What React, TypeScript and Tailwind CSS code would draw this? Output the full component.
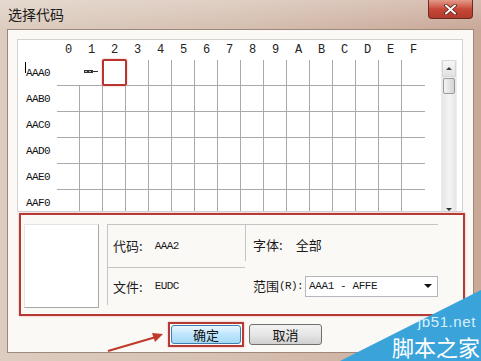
import React from 'react';

const cols = ['0', '1', '2', '3', '4', '5', '6', '7', '8', '9', 'A', 'B', 'C', 'D', 'E', 'F'];
const rows = ['AAA0', 'AAB0', 'AAC0', 'AAD0', 'AAE0', 'AAF0'];

const cjk = "font-['Noto_Sans_CJK_SC','Noto_Sans',sans-serif]";
const mono = "font-['Liberation_Mono','DejaVu_Sans_Mono',monospace]";

const Cell: React.FC<{ row: number; col: number }> = ({ row, col }) => {
  const last = col === 15;
  const hideLine = row === 0 && col === 0;
  return (
    <div
      className={`relative w-[23px] h-[26px] shrink-0 border-b border-[#a9a9a9] ${
        last || hideLine ? '' : 'border-r'
      }`}
    >
      {row === 0 && col === 1 && (
        <svg className="absolute left-[4px] top-[10px]" width="14" height="4" viewBox="0 0 14 4">
          <rect x="0" y="0" width="9" height="3" fill="#333" />
          <rect x="1" y="1" width="2" height="1" fill="#bbb" />
          <rect x="5" y="1" width="2" height="1" fill="#bbb" />
          <rect x="9" y="1" width="5" height="1" fill="#333" />
        </svg>
      )}
      {row === 0 && col === 2 && (
        <div className="absolute -left-[1px] -top-[1px] w-[25px] h-[27px] border-2 border-[#b8342f] shadow-[0_0_2px_#e89a98] rounded-[2px]" />
      )}
    </div>
  );
};

const GridPanel: React.FC = () => (
  <div className="w-[446px] h-[173px] shrink-0 border border-[#d2d2d2] bg-white flex overflow-hidden">
    <div className="flex flex-col">
      <div className={`h-[20px] flex items-center shrink-0 ${mono} text-[12px] text-[#222]`}>
        <div className="w-[39px] shrink-0" />
        {cols.map((c) => (
          <div key={c} className="w-[23px] shrink-0 text-center leading-none">
            {c}
          </div>
        ))}
      </div>
      {rows.map((r, ri) => (
        <div key={r} className="flex shrink-0">
          <div className={`relative w-[39px] shrink-0 h-[26px] flex items-center pl-[8px] ${mono} text-[11px] tracking-[-0.6px] text-[#111]`}>
            {ri === 0 && <div className="absolute left-[7px] top-[2px] w-[1px] h-[11px] bg-black" />}
            {r}
          </div>
          {cols.map((c, ci) => (
            <Cell key={c} row={ri} col={ci} />
          ))}
        </div>
      ))}
    </div>
    <div className="ml-[16px] mt-[20px] w-[16px] shrink-0 flex flex-col bg-[linear-gradient(to_right,#e6e6e6,#f4f4f4_50%,#e6e6e6)] border-x border-[#ececec]">
      <div className="h-[17px] flex items-center justify-center bg-gradient-to-b from-[#f7f7f7] to-[#e2e2e2] border border-[#d6d6d6] rounded-[2px]">
        <div className="w-0 h-0 border-x-[3px] border-x-transparent border-b-[3px] border-b-[#404040]" />
      </div>
      <div className="mt-[1px] h-[16px] mx-[1px] bg-gradient-to-r from-[#f3f3f3] via-[#e4e4e4] to-[#d4d4d4] border border-[#9a9a9a] rounded-[2px]" />
      <div className="flex-1" />
      <div className="h-[3px] flex justify-center">
        <div className="w-0 h-0 border-x-[3px] border-x-transparent border-t-[3px] border-t-[#303030]" />
      </div>
    </div>
  </div>
);

const InfoArea: React.FC = () => (
  <div className="ml-[2px] mt-[1px] w-[446px] h-[103px] shrink-0 border-2 border-[#b53a36] shadow-[0_0_2px_#eaa6a4] flex pl-[3px] pt-[9px]">
    <div className="w-[75px] h-[84px] border border-[#e4e4e4] border-r-[#a8a8a8] border-b-[#a8a8a8] bg-white" />
    <div className={`ml-[8px] flex flex-col ${cjk} text-[13px] text-[#1a1a1a]`}>
      <div className="flex h-[43px]">
        <div className="w-[138px] border-t border-l border-[#c4c4c4] flex items-center pl-[5px]">
          <span>代码:</span>
          <span className={`ml-[12px] ${mono} text-[11px] tracking-[-0.6px]`}>AAA2</span>
        </div>
        <div className="w-[193px] h-[37px] border-t border-l border-[#c4c4c4] flex items-center pl-[7px] pt-[4px]">
          <span>字体:</span>
          <span className="ml-[13px]">全部</span>
        </div>
      </div>
      <div className="flex h-[38px]">
        <div className="w-[138px] border-t border-l border-[#c4c4c4] flex items-center pl-[5px]">
          <span>文件:</span>
          <span className={`ml-[12px] ${mono} text-[11px] tracking-[-0.6px]`}>EUDC</span>
        </div>
        <div className="flex items-center pl-[8px]">
          <span>范围</span>
          <span className={`${mono} text-[11px] tracking-[-0.6px]`}>(R):</span>
          <div className="ml-[2px] w-[133px] h-[21px] border border-[#b4b6bc] bg-white flex items-center pl-[3px] pr-[5px]">
            <span className={`${mono} text-[11px] tracking-[-0.4px] whitespace-pre`}>AAA1 - AFFE</span>
            <div className="ml-auto w-0 h-0 border-x-[4px] border-x-transparent border-t-[4px] border-t-[#111]" />
          </div>
        </div>
      </div>
    </div>
  </div>
);

export default function App() {
  return (
    <div className="relative w-[481px] h-[361px] overflow-hidden flex flex-col bg-gradient-to-r from-[#ddcdc0] via-[#d5bfb0] to-[#c9a898]">
      <div className="h-[29px] shrink-0 flex justify-between items-start bg-gradient-to-b from-white/25 to-transparent">
        <div className={`pl-[8px] pt-[4px] ${cjk} text-[14px] text-[#1b1b1b]`}>选择代码</div>
        <div className="mr-[8px] w-[45px] h-[19px] rounded-b-[4px] border border-t-0 border-[#6d2a22] bg-gradient-to-b from-[#e39a8a] via-[#c8483a] to-[#b13a2c] flex items-center justify-center">
          <svg width="13" height="11" viewBox="0 0 13 11">
            <path d="M2 1.5 L11 9.5 M11 1.5 L2 9.5" stroke="#5a1e18" strokeWidth="3.6" strokeLinecap="round" />
            <path d="M2 1.5 L11 9.5 M11 1.5 L2 9.5" stroke="#fff" strokeWidth="2" strokeLinecap="round" />
          </svg>
        </div>
      </div>
      <div className="mx-[7px] h-[324px] shrink-0 border border-[#9d8879] bg-[#fbf9f6] flex flex-col pt-[9px] pl-[9px]">
        <GridPanel />
        <InfoArea />
        <div className={`mt-[6px] flex justify-center gap-[5px] ${cjk} text-[13px] text-[#111]`}>
          <div className="w-[76px] h-[25px] border-2 border-[#b53a36] shadow-[0_0_2px_#eaa6a4] flex">
            <div className="flex-1 m-[1px] border border-[#3c7fb1] rounded-[3px] bg-gradient-to-b from-[#eaf6fd] via-[#bee6fd] to-[#a7d9f5] flex items-center justify-center">
              确定
            </div>
          </div>
          <div className="mt-[2px] w-[73px] h-[21px] border border-[#707070] rounded-[3px] bg-gradient-to-b from-[#f2f2f2] via-[#e6e6e6] to-[#d0d0d0] flex items-center justify-center">
            取消
          </div>
        </div>
      </div>
      <svg className="absolute left-0 top-0" width="481" height="361" viewBox="0 0 481 361">
        <line x1="108" y1="351" x2="156" y2="337" stroke="#c0392b" strokeWidth="2.2" />
        <polygon points="163,334 152,333 155,342" fill="#c0392b" />
        <polygon points="340,361 481,290 481,361" fill="#3aa3da" />
      </svg>
      <div className="absolute right-[5px] top-[314px] font-['Liberation_Sans',sans-serif] text-[15px] leading-[16px] text-[#d8effb] tracking-[0.6px]">
        jb51.net
      </div>
      <div className={`absolute right-[1px] top-[335px] ${cjk} text-[22px] leading-[22px] text-white`}>脚本之家</div>
    </div>
  );
}
